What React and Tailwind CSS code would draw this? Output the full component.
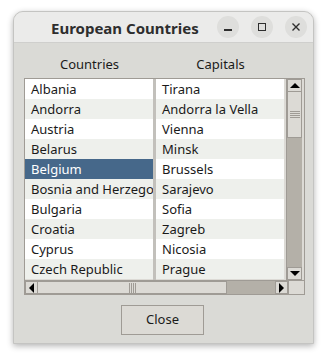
import React from "react";

const rows = [
  ["Albania", "Tirana"],
  ["Andorra", "Andorra la Vella"],
  ["Austria", "Vienna"],
  ["Belarus", "Minsk"],
  ["Belgium", "Brussels"],
  ["Bosnia and Herzegovina", "Sarajevo"],
  ["Bulgaria", "Sofia"],
  ["Croatia", "Zagreb"],
  ["Cyprus", "Nicosia"],
  ["Czech Republic", "Prague"],
];

function Col({ idx, sel }) {
  return (
    <div className="w-[128px] flex flex-col overflow-hidden">
      {rows.map((r, i) => {
        const isSel = sel && i === 4;
        const bg = isSel ? "bg-[#46688a]" : i % 2 === 0 ? "bg-white" : "bg-[#eef0ec]";
        return (
          <div
            key={i}
            className={`h-[20px] flex items-center pl-[6px] whitespace-nowrap overflow-hidden text-[13px] leading-none ${bg} ${isSel ? "text-white" : "text-[#1a1a1a]"}`}
          >
            {r[idx]}
          </div>
        );
      })}
    </div>
  );
}

export default function App() {
  return (
    <div className="w-[327px] h-[362px] bg-white pt-[11px] pl-[13px]" style={{ fontFamily: '"Noto Sans", "Open Sans", sans-serif' }}>
      <div className="w-[301px] h-[333px] rounded-t-[10px] flex flex-col bg-[#dadad6] border border-[#c4c4c2] shadow-[0_2px_6px_rgba(0,0,0,0.3)] overflow-hidden">
        {/* title bar */}
        <div className="h-[31px] shrink-0 bg-[#ebebea] border-b border-[#cfcfcd] flex items-center relative">
          <div className="absolute left-[37px] top-[5px] text-[15px] font-bold text-[#2e2e2e]">European Countries</div>
          <div className="ml-auto mr-[6px] flex gap-[12px] items-center">
            <div className="w-[22px] h-[22px] rounded-full bg-[#dededc] flex items-center justify-center">
              <div className="w-[8px] h-[1.5px] bg-[#2e2e2e] mt-[6px]" />
            </div>
            <div className="w-[22px] h-[22px] rounded-full bg-[#dededc] flex items-center justify-center">
              <div className="w-[8px] h-[8px] border border-[#2e2e2e]" />
            </div>
            <div className="w-[22px] h-[22px] rounded-full bg-[#dededc] flex items-center justify-center">
              <svg width="10" height="10" viewBox="0 0 10 10"><path d="M1.5 1.5 L8.5 8.5 M8.5 1.5 L1.5 8.5" stroke="#2e2e2e" strokeWidth="1.4" /></svg>
            </div>
          </div>
        </div>
        {/* headers */}
        <div className="h-[35px] shrink-0 flex pl-[10px] text-[13px] text-[#1a1a1a]">
          <div className="w-[131px] flex items-center justify-center pt-[9px]">Countries</div>
          <div className="w-[131px] flex items-center justify-center pt-[9px]">Capitals</div>
        </div>
        {/* list box */}
        <div className="ml-[10px] w-[281px] h-[217px] border border-[#9f9b95] flex flex-col bg-[#dcdad5]">
          <div className="flex h-[201px]">
            <div className="border-r-[3px] border-[#c2c0bb]">
              <Col idx={0} sel />
            </div>
            <Col idx={1} />
            <div className="w-[2px]" />
            {/* vertical scrollbar */}
            <div className="w-[16px] bg-[#b4b0a8] border-l border-[#9f9b95] flex flex-col">
              <div className="h-[13px] bg-[#dcdad5] border border-[#9f9b95] flex items-center justify-center">
                <div className="w-0 h-0 border-l-[5px] border-r-[5px] border-b-[5px] border-l-transparent border-r-transparent border-b-black" />
              </div>
              <div className="h-[46px] bg-[#dcdad5] border-x border-b border-[#9f9b95] flex flex-col items-center justify-center gap-[1px]">
                <div className="w-[10px] h-[1px] bg-[#9f9b95]" />
                <div className="w-[10px] h-[1px] bg-[#9f9b95]" />
                <div className="w-[10px] h-[1px] bg-[#9f9b95]" />
                <div className="w-[10px] h-[1px] bg-[#9f9b95]" />
              </div>
              <div className="flex-1" />
              <div className="h-[13px] bg-[#dcdad5] border border-[#9f9b95] flex items-center justify-center">
                <div className="w-0 h-0 border-l-[5px] border-r-[5px] border-t-[5px] border-l-transparent border-r-transparent border-t-black" />
              </div>
            </div>
          </div>
          {/* horizontal scrollbar */}
          <div className="h-[14px] flex border-t border-[#9f9b95]">
            <div className="flex-1 flex bg-[#b4b0a8]">
              <div className="w-[13px] bg-[#dcdad5] border border-[#9f9b95] flex items-center justify-center">
                <div className="w-0 h-0 border-t-[5px] border-b-[5px] border-r-[5px] border-t-transparent border-b-transparent border-r-black" />
              </div>
              <div className="w-[189px] bg-[#dcdad5] border-y border-r border-[#9f9b95] flex items-center justify-center gap-[1px]">
                <div className="w-[1px] h-[10px] bg-[#9f9b95]" />
                <div className="w-[1px] h-[10px] bg-[#9f9b95]" />
                <div className="w-[1px] h-[10px] bg-[#9f9b95]" />
                <div className="w-[1px] h-[10px] bg-[#9f9b95]" />
              </div>
              <div className="flex-1" />
              <div className="w-[13px] bg-[#dcdad5] border border-[#9f9b95] flex items-center justify-center">
                <div className="w-0 h-0 border-t-[5px] border-b-[5px] border-l-[5px] border-t-transparent border-b-transparent border-l-black" />
              </div>
            </div>
            <div className="w-[16px] bg-[#dcdad5] border-l border-[#9f9b95]" />
          </div>
        </div>
        {/* button */}
        <div className="flex pt-[10px] pl-[107px]">
          <div className="w-[83px] h-[30px] border border-[#9f9b95] bg-[#dcdad5] flex items-center justify-center text-[13px] text-[#1a1a1a]">
            Close
          </div>
        </div>
      </div>
    </div>
  );
}
